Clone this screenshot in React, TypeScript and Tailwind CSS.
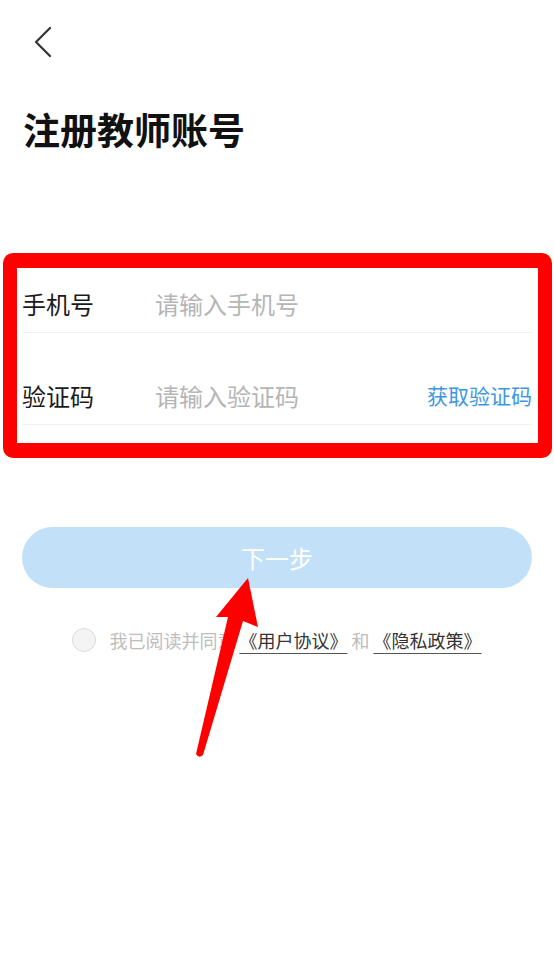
import React from "react";

const font = "font-['Noto_Sans_CJK_SC','Noto_Sans',sans-serif]";

function BackIcon() {
  return (
    <svg width="20" height="32" viewBox="0 0 20 32" fill="none" className="ml-[33px] mt-[26px] block">
      <path d="M17 2 L3 16 L17 30" stroke="#333333" strokeWidth="2.2" strokeLinecap="round" strokeLinejoin="round" />
    </svg>
  );
}

function Arrow() {
  return (
    <svg className="pointer-events-none absolute inset-0" width="554" height="953" viewBox="0 0 554 953">
      <path
        d="M248 578 L258 627 L243 621 L203 755 Q199 759 196 754 L228 617 L216 617 Z"
        fill="#ff0000"
      />
    </svg>
  );
}

export default function App() {
  return (
    <div className={`relative h-[953px] w-[554px] overflow-hidden bg-white ${font}`}>
      <BackIcon />

      <h1 className="ml-[23px] mt-[51px] text-[37px] font-bold leading-[40px] text-[#111]">
        注册教师账号
      </h1>

      {/* highlighted form */}
      <div className="ml-[3px] mr-[2px] mt-[104px] rounded-[10px] border-x-[14px] border-y-[15px] border-[#ff0000] pb-[18px] pl-[5px] pr-[6px]">
        <div className="flex h-[65px] items-center border-b border-[#f1f1f1] pt-[8px] text-[24px]">
          <span className="w-[133px] text-[#1a1a1a]">手机号</span>
          <span className="text-[#b5b5b5]">请输入手机号</span>
        </div>
        <div className="flex h-[92px] items-center border-b border-[#f1f1f1] pt-[35px] text-[24px]">
          <span className="w-[133px] text-[#1a1a1a]">验证码</span>
          <span className="flex-1 text-[#b5b5b5]">请输入验证码</span>
          <span className="text-[21px] text-[#3d97e0]">获取验证码</span>
        </div>
      </div>

      <button className="mx-[22px] mt-[69px] flex h-[61px] w-[510px] items-center justify-center rounded-full bg-[#c2e1f9] text-[24px] text-white">
        下一步
      </button>

      <div className="mt-[40px] flex items-center justify-center gap-[13px]">
        <span className="h-[24px] w-[24px] rounded-full border border-[#dcdcdc] bg-[#f4f4f4]" />
        <p className="text-[18px] leading-[24px] text-[#bdbdbd]">
          我已阅读并同意
          <span className="ml-[4px] text-[#333] underline decoration-[#555] underline-offset-[5px]">《用户协议》</span>
          {" 和 "}
          <span className="text-[#333] underline decoration-[#555] underline-offset-[5px]">《隐私政策》</span>
        </p>
      </div>

      <Arrow />
    </div>
  );
}
